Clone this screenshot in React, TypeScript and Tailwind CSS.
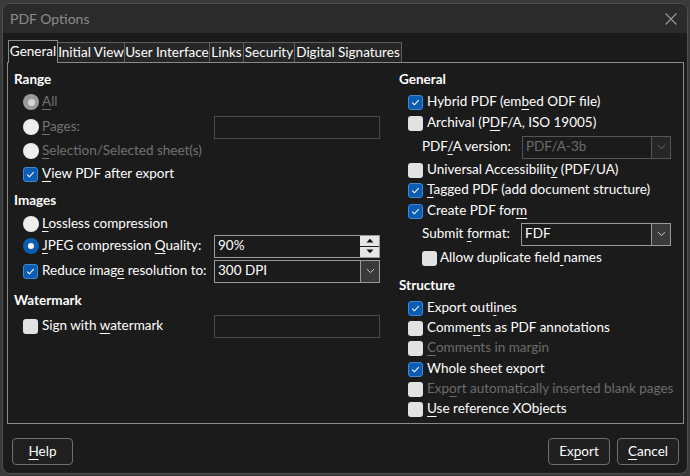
import React from 'react';

// mnemonic label: underlines the character at index i
const Mn = ({ t, i }: { t: string; i?: number }) => {
  if (i === undefined || i < 0) return <span className="whitespace-pre">{t}</span>;
  return (
    <span className="whitespace-pre">
      {t.slice(0, i)}
      <span className="underline underline-offset-[3px] decoration-1">{t[i]}</span>
      {t.slice(i + 1)}
    </span>
  );
};

const Check = ({ on }: { on?: boolean }) =>
  on ? (
    <span className="w-[15px] h-[15px] rounded-[3px] bg-[#0b5cb3] border border-[#3f86d4] flex items-center justify-center shrink-0">
      <svg width="11" height="11" viewBox="0 0 11 11">
        <path d="M2.2 5.6 L4.4 7.8 L8.8 3.2" fill="none" stroke="#ffffff" strokeWidth="1.1" />
      </svg>
    </span>
  ) : (
    <span className="w-[15px] h-[15px] rounded-[3px] bg-[#e2e2e2] shrink-0" />
  );

const Radio = ({ on, dim }: { on?: boolean; dim?: boolean }) => {
  if (on && dim)
    return (
      <span className="w-[16px] h-[16px] rounded-full bg-[#9b9b9b] flex items-center justify-center shrink-0">
        <span className="w-[7px] h-[7px] rounded-full bg-[#d6d6d6]" />
      </span>
    );
  if (on)
    return (
      <span className="w-[16px] h-[16px] rounded-full bg-[#0b5cb3] flex items-center justify-center shrink-0">
        <span className="w-[6px] h-[6px] rounded-full bg-white" />
      </span>
    );
  return <span className="w-[16px] h-[16px] rounded-full bg-[#eeeeee] shrink-0" />;
};

const Chevron = ({ dim }: { dim?: boolean }) => (
  <svg width="9" height="6" viewBox="0 0 9 6">
    <path d="M0.8 1 L4.5 4.6 L8.2 1" fill="none" stroke={dim ? '#6a6a6a' : '#c8c8c8'} strokeWidth="1" />
  </svg>
);

const Combo = ({ value, dim, w }: { value: string; dim?: boolean; w: string }) => (
  <div
    className={`${w} h-[23px] shrink-0 flex border ${dim ? 'border-[#555555]' : 'border-[#9a9a9a]'} bg-[#1b1b1b]`}
  >
    <div className={`flex-1 flex items-center pl-[3px] ${dim ? 'text-[#6c6c6c]' : 'text-white'}`}>{value}</div>
    <div
      className={`w-[19px] flex items-center justify-center border-l ${
        dim ? 'border-[#555555] bg-[#262626]' : 'border-[#9a9a9a] bg-[#3a3a3a]'
      }`}
    >
      <Chevron dim={dim} />
    </div>
  </div>
);

const Field = () => <div className="w-[166px] h-[23px] shrink-0 border border-[#4a4a4a] bg-[#1b1b1b]" />;

const Spin = () => (
  <div className="w-[166px] h-[23px] shrink-0 flex border border-[#9a9a9a] bg-[#1b1b1b]">
    <div className="flex-1 flex items-center pl-[3px] text-white">90%</div>
    <div className="w-[19px] flex flex-col gap-[1px] bg-[#1b1b1b]">
      <div className="flex-1 bg-[#e6e6e6] flex items-center justify-center">
        <svg width="8" height="5" viewBox="0 0 8 5">
          <path d="M0.5 4.5 L4 0.8 L7.5 4.5 Z" fill="#111111" />
        </svg>
      </div>
      <div className="flex-1 bg-[#e6e6e6] flex items-center justify-center">
        <svg width="8" height="5" viewBox="0 0 8 5">
          <path d="M0.5 0.5 L4 4.2 L7.5 0.5 Z" fill="#111111" />
        </svg>
      </div>
    </div>
  </div>
);

const tabs = [
  { label: 'General', w: 'w-[50px]' },
  { label: 'Initial View', w: 'w-[67px]' },
  { label: 'User Interface', w: 'w-[85px]' },
  { label: 'Links', w: 'w-[34px]' },
  { label: 'Security', w: 'w-[51px]' },
  { label: 'Digital Signatures', w: 'w-[107px]' },
];

const Btn = ({ t, i, w }: { t: string; i: number; w: string }) => (
  <button className={`${w} h-[27px] rounded-[4px] border border-[#6e6e6e] bg-[#202020] text-white`}>
    <Mn t={t} i={i} />
  </button>
);

export default function App() {
  return (
    <div
      className="w-[690px] h-[476px] bg-[#3a3a3a] pt-[3px] px-[2px] pb-[2px] text-[13.5px] leading-none"
      style={{ fontFamily: 'Lato, "Noto Sans", sans-serif' }}
    >
      <div className="h-full rounded-[8px] border border-[#505050] bg-[#1b1b1b] flex flex-col overflow-hidden">
        {/* title bar */}
        <div className="h-[29px] shrink-0 bg-[#2b2b2b] flex items-center justify-between pl-[7px] pr-[10px]">
          <span className="text-[#8c8c8c] text-[14px]">PDF Options</span>
          <svg width="12" height="12" viewBox="0 0 12 12">
            <path d="M0.5 0.5 L11.5 11.5 M11.5 0.5 L0.5 11.5" stroke="#9a9a9a" strokeWidth="1.1" />
          </svg>
        </div>

        <div className="flex-1 pl-[4px] pr-[3px] pt-[7px]">
          {/* tabs */}
          <div className="h-[22px] flex items-end pl-[1px] relative z-10">
            {tabs.map((t, idx) =>
              idx === 0 ? (
                <div
                  key={t.label}
                  className={`${t.w} h-[23px] -mb-[1px] border border-b-0 border-[#8a8a8a] bg-[#1b1b1b] flex items-center justify-center text-white whitespace-nowrap`}
                >
                  {t.label}
                </div>
              ) : (
                <div
                  key={t.label}
                  className={`${t.w} h-[20px] border border-l-0 border-b-0 border-[#5e5e5e] bg-[#262626] flex items-center justify-center text-white whitespace-nowrap`}
                >
                  {t.label}
                </div>
              ),
            )}
          </div>

          {/* panel */}
          <div className="h-[362px] border border-[#8a8a8a] flex text-white">
            {/* left column */}
            <div className="w-[384px] shrink-0 pl-[6px] pt-[6px] flex flex-col">
              <div className="h-[22px] flex items-center font-bold">Range</div>
              <div className="h-[22px] flex items-center pl-[9px] gap-[3px] text-[#727272]">
                <Radio on dim />
                <Mn t="All" i={0} />
              </div>
              <div className="h-[22px] mt-[3px] flex items-center pl-[9px]">
                <div className="w-[191px] shrink-0 flex items-center gap-[3px] text-[#727272]">
                  <Radio />
                  <Mn t="Pages:" i={0} />
                </div>
                <Field />
              </div>
              <div className="h-[22px] mt-[2px] flex items-center pl-[9px] gap-[3px] text-[#727272]">
                <Radio />
                <Mn t="Selection/Selected sheet(s)" i={0} />
              </div>
              <div className="h-[22px] mt-[1px] flex items-center pl-[9px] gap-[4px]">
                <Check on />
                <Mn t="View PDF after export" i={0} />
              </div>

              <div className="h-[22px] mt-[5px] flex items-center font-bold">Images</div>
              <div className="h-[22px] mt-[1px] flex items-center pl-[9px] gap-[3px]">
                <Radio />
                <Mn t="Lossless compression" i={0} />
              </div>
              <div className="h-[22px] flex items-center pl-[9px]">
                <div className="w-[191px] shrink-0 flex items-center gap-[3px]">
                  <Radio on />
                  <span className="whitespace-pre">
                    <Mn t="JPEG compression " i={0} />
                    <Mn t="Quality:" i={0} />
                  </span>
                </div>
                <Spin />
              </div>
              <div className="h-[22px] mt-[3px] flex items-center pl-[9px]">
                <div className="w-[191px] shrink-0 flex items-center gap-[4px]">
                  <Check on />
                  <Mn t="Reduce image resolution to:" i={11} />
                </div>
                <Combo value="300 DPI" w="w-[166px]" />
              </div>

              <div className="h-[22px] mt-[8px] flex items-center font-bold">Watermark</div>
              <div className="h-[22px] mt-[3px] flex items-center pl-[9px]">
                <div className="w-[191px] shrink-0 flex items-center gap-[4px]">
                  <Check />
                  <Mn t="Sign with watermark" i={10} />
                </div>
                <Field />
              </div>
            </div>

            {/* right column */}
            <div className="flex-1 min-w-0 pl-[7px] pt-[7px] flex flex-col">
              <div className="h-[20px] flex items-center font-bold">General</div>
              <div className="h-[20px] mt-[2px] flex items-center pl-[9px] gap-[4px]">
                <Check on />
                <Mn t="Hybrid PDF (embed ODF file)" i={14} />
              </div>
              <div className="h-[20px] mt-[1px] flex items-center pl-[9px] gap-[4px]">
                <Check />
                <Mn t="Archival (PDF/A, ISO 19005)" i={11} />
              </div>
              <div className="h-[20px] mt-[4px] flex items-center pl-[23px]">
                <div className="w-[100px] shrink-0">
                  <Mn t="PDF/A version:" i={3} />
                </div>
                <Combo value="PDF/A-3b" dim w="w-[149px]" />
              </div>
              <div className="h-[20px] mt-[3px] flex items-center pl-[9px] gap-[4px]">
                <Check />
                <Mn t="Universal Accessibility (PDF/UA)" i={22} />
              </div>
              <div className="h-[20px] flex items-center pl-[9px] gap-[4px]">
                <Check on />
                <Mn t="Tagged PDF (add document structure)" i={0} />
              </div>
              <div className="h-[20px] mt-[1px] flex items-center pl-[9px] gap-[4px]">
                <Check on />
                <Mn t="Create PDF form" i={14} />
              </div>
              <div className="h-[20px] mt-[3px] flex items-center pl-[23px]">
                <div className="w-[99px] shrink-0">
                  <Mn t="Submit format:" i={7} />
                </div>
                <Combo value="FDF" w="w-[150px]" />
              </div>
              <div className="h-[20px] mt-[4px] flex items-center pl-[23px] gap-[3px]">
                <Check />
                <Mn t="Allow duplicate field names" i={21} />
              </div>

              <div className="h-[20px] mt-[8px] flex items-center font-bold">Structure</div>
              <div className="h-[20px] mt-[2px] flex items-center pl-[9px] gap-[4px]">
                <Check on />
                <Mn t="Export outlines" i={11} />
              </div>
              <div className="h-[20px] flex items-center pl-[9px] gap-[4px]">
                <Check />
                <Mn t="Comments as PDF annotations" i={5} />
              </div>
              <div className="h-[20px] flex items-center pl-[9px] gap-[4px] text-[#6c6c6c]">
                <Check />
                <Mn t="Comments in margin" i={0} />
              </div>
              <div className="h-[20px] mt-[1px] flex items-center pl-[9px] gap-[4px]">
                <Check on />
                <Mn t="Whole sheet export" />
              </div>
              <div className="h-[20px] flex items-center pl-[9px] gap-[4px] text-[#6c6c6c]">
                <Check />
                <Mn t="Export automatically inserted blank pages" i={3} />
              </div>
              <div className="h-[20px] flex items-center pl-[9px] gap-[4px]">
                <Check />
                <Mn t="Use reference XObjects" i={0} />
              </div>
            </div>
          </div>

          {/* footer */}
          <div className="mt-[14px] flex items-center pl-[5px] pr-[5px]">
            <Btn t="Help" i={0} w="w-[61px]" />
            <div className="flex-1" />
            <Btn t="Export" i={2} w="w-[62px]" />
            <div className="w-[7px]" />
            <Btn t="Cancel" i={0} w="w-[62px]" />
          </div>
        </div>
      </div>
    </div>
  );
}
